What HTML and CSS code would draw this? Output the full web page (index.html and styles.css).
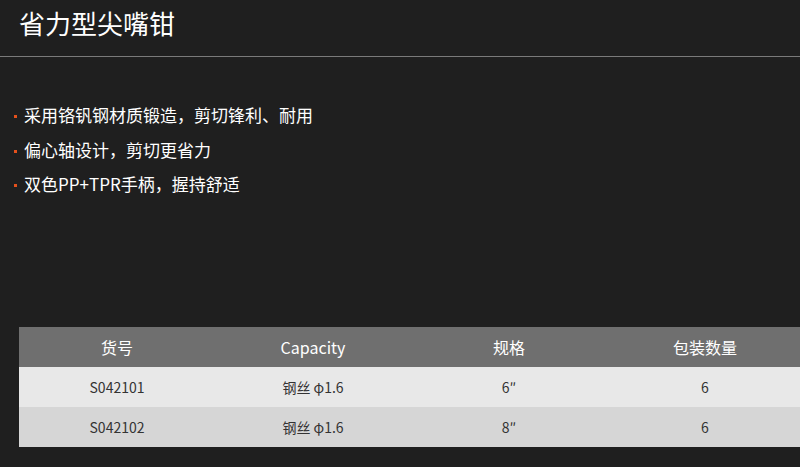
FILE: index.html
```html
<!DOCTYPE html>
<html lang="zh">
<head>
<meta charset="utf-8">
<link rel="stylesheet" href="styles.css">
</head>
<body>
<div class="page">
  <h1 class="title">省力型尖嘴钳</h1>
  <div class="rule"></div>
  <ul class="features">
    <li>采用铬钒钢材质锻造，剪切锋利、耐用</li>
    <li>偏心轴设计，剪切更省力</li>
    <li>双色PP+TPR手柄，握持舒适</li>
  </ul>
  <table class="spec">
    <thead>
      <tr><th>货号</th><th>Capacity</th><th>规格</th><th>包装数量</th></tr>
    </thead>
    <tbody>
      <tr class="odd"><td>S042101</td><td>钢丝 φ1.6</td><td>6″</td><td>6</td></tr>
      <tr class="even"><td>S042102</td><td>钢丝 φ1.6</td><td>8″</td><td>6</td></tr>
    </tbody>
  </table>
</div>
</body>
</html>
```

FILE: styles.css
```css
html, body {
  margin: 0;
  padding: 0;
  background: #1f1f1f;
  overflow: hidden;
}
body {
  width: 800px;
  height: 467px;
  font-family: "Noto Sans CJK SC", "Noto Sans", sans-serif;
}
.page {
  display: flex;
  flex-direction: column;
}
.title {
  margin: 0;
  padding: 6px 0 0 19px;
  height: 56px;
  box-sizing: border-box;
  font-size: 26px;
  line-height: 34px;
  font-weight: 400;
  color: #ffffff;
}
.rule {
  height: 1px;
  background: #7a7a7a;
}
.features {
  list-style: none;
  margin: 41px 0 0 0;
  padding: 0 0 0 24px;
}
.features li {
  position: relative;
  font-size: 17px;
  line-height: 34.5px;
  color: #ffffff;
}
.features li::before {
  content: "";
  position: absolute;
  left: -10px;
  top: 17px;
  width: 3px;
  height: 3px;
  background: #e4501c;
}
.spec {
  margin: 125px 0 0 19px;
  width: 784px;
  min-width: 784px;
  border-collapse: collapse;
  table-layout: fixed;
}
.spec th, .spec td {
  width: 196px;
  height: 40px;
  padding: 0;
  text-align: center;
  vertical-align: middle;
}
.spec th {
  background: #6f6f6f;
  color: #ffffff;
  font-size: 16px;
  font-weight: 400;
}
.spec td {
  font-size: 14px;
  color: #333333;
}
.spec .odd td { background: #e8e8e8; }
.spec .even td { background: #d6d6d6; }
```
